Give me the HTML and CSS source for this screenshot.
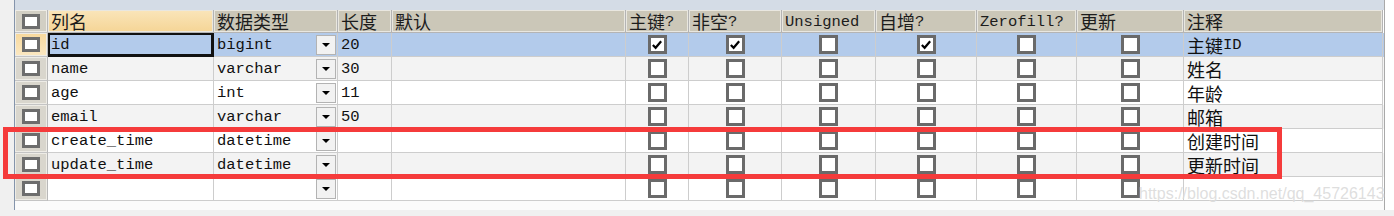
FILE: index.html
```html
<!DOCTYPE html>
<html lang="zh">
<head>
<meta charset="utf-8">
<title>表设计</title>
<link rel="stylesheet" href="styles.css">
</head>
<body>
<div class="page">
  <div class="main">
    <div class="lstrip"></div>
    <div class="panel">
      <div class="topband"></div>
      <div class="row head">
        <div class="hc ind"><span class="box"></span></div>
        <div class="hc active"><span class="zh">列名</span></div>
        <div class="hc"><span class="zh">数据类型</span></div>
        <div class="hc"><span class="zh">长度</span></div>
        <div class="hc"><span class="zh">默认</span></div>
        <div class="hc"><span class="zh">主键</span><span class="lat">?</span></div>
        <div class="hc"><span class="zh">非空</span><span class="lat">?</span></div>
        <div class="hc"><span class="lat">Unsigned</span></div>
        <div class="hc"><span class="zh">自增</span><span class="lat">?</span></div>
        <div class="hc"><span class="lat">Zerofill?</span></div>
        <div class="hc"><span class="zh">更新</span></div>
        <div class="hc"><span class="zh">注释</span></div>
      </div>

      <div class="row sel">
        <div class="c ind cur"><span class="box"></span></div>
        <div class="c focus">id</div>
        <div class="c type">bigint<span class="dd"><i></i></span></div>
        <div class="c">20</div>
        <div class="c"></div>
        <div class="c chk"><span class="cb on"><svg viewBox="0 0 13 13"><path d="M2 6.5 L5 9.5 L11 2.5"/></svg></span></div>
        <div class="c chk"><span class="cb on"><svg viewBox="0 0 13 13"><path d="M2 6.5 L5 9.5 L11 2.5"/></svg></span></div>
        <div class="c chk"><span class="cb"></span></div>
        <div class="c chk"><span class="cb on"><svg viewBox="0 0 13 13"><path d="M2 6.5 L5 9.5 L11 2.5"/></svg></span></div>
        <div class="c chk"><span class="cb"></span></div>
        <div class="c chk"><span class="cb"></span></div>
        <div class="c"><span class="zh">主键</span><span class="lat">ID</span></div>
      </div>

      <div class="row alt">
        <div class="c ind"><span class="box"></span></div>
        <div class="c">name</div>
        <div class="c type">varchar<span class="dd"><i></i></span></div>
        <div class="c">30</div>
        <div class="c"></div>
        <div class="c chk"><span class="cb"></span></div>
        <div class="c chk"><span class="cb"></span></div>
        <div class="c chk"><span class="cb"></span></div>
        <div class="c chk"><span class="cb"></span></div>
        <div class="c chk"><span class="cb"></span></div>
        <div class="c chk"><span class="cb"></span></div>
        <div class="c"><span class="zh">姓名</span></div>
      </div>

      <div class="row">
        <div class="c ind"><span class="box"></span></div>
        <div class="c">age</div>
        <div class="c type">int<span class="dd"><i></i></span></div>
        <div class="c">11</div>
        <div class="c"></div>
        <div class="c chk"><span class="cb"></span></div>
        <div class="c chk"><span class="cb"></span></div>
        <div class="c chk"><span class="cb"></span></div>
        <div class="c chk"><span class="cb"></span></div>
        <div class="c chk"><span class="cb"></span></div>
        <div class="c chk"><span class="cb"></span></div>
        <div class="c"><span class="zh">年龄</span></div>
      </div>

      <div class="row alt">
        <div class="c ind"><span class="box"></span></div>
        <div class="c">email</div>
        <div class="c type">varchar<span class="dd"><i></i></span></div>
        <div class="c">50</div>
        <div class="c"></div>
        <div class="c chk"><span class="cb"></span></div>
        <div class="c chk"><span class="cb"></span></div>
        <div class="c chk"><span class="cb"></span></div>
        <div class="c chk"><span class="cb"></span></div>
        <div class="c chk"><span class="cb"></span></div>
        <div class="c chk"><span class="cb"></span></div>
        <div class="c"><span class="zh">邮箱</span></div>
      </div>

      <div class="row">
        <div class="c ind"><span class="box"></span></div>
        <div class="c">create_time</div>
        <div class="c type">datetime<span class="dd"><i></i></span></div>
        <div class="c"></div>
        <div class="c"></div>
        <div class="c chk"><span class="cb"></span></div>
        <div class="c chk"><span class="cb"></span></div>
        <div class="c chk"><span class="cb"></span></div>
        <div class="c chk"><span class="cb"></span></div>
        <div class="c chk"><span class="cb"></span></div>
        <div class="c chk"><span class="cb"></span></div>
        <div class="c"><span class="zh">创建时间</span></div>
      </div>

      <div class="row alt">
        <div class="c ind"><span class="box"></span></div>
        <div class="c">update_time</div>
        <div class="c type">datetime<span class="dd"><i></i></span></div>
        <div class="c"></div>
        <div class="c"></div>
        <div class="c chk"><span class="cb"></span></div>
        <div class="c chk"><span class="cb"></span></div>
        <div class="c chk"><span class="cb"></span></div>
        <div class="c chk"><span class="cb"></span></div>
        <div class="c chk"><span class="cb"></span></div>
        <div class="c chk"><span class="cb"></span></div>
        <div class="c"><span class="zh">更新时间</span></div>
      </div>

      <div class="row">
        <div class="c ind"><span class="box"></span></div>
        <div class="c"></div>
        <div class="c type"><span class="dd"><i></i></span></div>
        <div class="c"></div>
        <div class="c"></div>
        <div class="c chk"><span class="cb"></span></div>
        <div class="c chk"><span class="cb"></span></div>
        <div class="c chk"><span class="cb"></span></div>
        <div class="c chk"><span class="cb"></span></div>
        <div class="c chk"><span class="cb"></span></div>
        <div class="c chk"><span class="cb"></span></div>
        <div class="c"></div>
      </div>
      <div class="filler"></div>
    </div>
    <div class="rstrip"></div>
  </div>
  <div class="foot"></div>

  <div class="mark"></div>
  <div class="wm">https://blog.csdn.net/qq_45726143</div>
</div>
</body>
</html>
```

FILE: styles.css
```css
html, body {
  margin: 0;
  padding: 0;
  background: #ffffff;
}

.page {
  position: relative;
  width: 1394px;
  height: 216px;
  overflow: hidden;
  display: flex;
  flex-direction: column;
}

.main {
  display: flex;
  height: 210px;
}

.lstrip {
  width: 14px;
  background: #f0f0f0;
}

.rstrip {
  flex: 1;
  background: #ffffff;
}

.foot {
  height: 6px;
  background: #f0f0f0;
}

.panel {
  width: 1369px;
  border-left: 1px solid #8494ab;
  border-right: 1px solid #a9a9a9;
  background: #fbfbfb;
  display: flex;
  flex-direction: column;
}

.topband {
  height: 10px;
  background: #d4dce6;
}

.filler {
  flex: 1;
}

.row {
  display: grid;
  grid-template-columns: 33px 166px 124px 54px 234px 63px 93px 94px 101px 100px 107px 199px;
  background: #ffffff;
}

.row.alt {
  background: #f3f3f3;
}

.row.sel {
  background: #b3cbeb;
}

.c, .hc {
  box-sizing: border-box;
  display: flex;
  align-items: center;
  padding-left: 3px;
  white-space: nowrap;
  font-family: "Liberation Mono", "Noto Sans CJK SC", monospace;
  font-size: 15.5px;
  line-height: 18px;
  color: #101010;
}

.c {
  height: 24px;
  border-right: 1px solid #cdcdcd;
  border-bottom: 1px solid #cdcdcd;
}

.hc {
  height: 23px;
  background: #cbc7b8;
  border-right: 1px solid #b4b4b4;
  border-bottom: 1px solid #b4b4b4;
  box-shadow: inset 1px 1px 0 #e9e7e0, inset -1px -1px 0 #e9e7e0;
  color: #1c1c1c;
}

.hc.active {
  background: linear-gradient(#fae5ba, #f5d596);
}

.zh {
  font-family: "Noto Sans CJK SC", sans-serif;
  font-size: 18px;
  line-height: 20px;
}

.lat {
  font-family: "Liberation Mono", monospace;
  font-size: 15.5px;
  line-height: 18px;
  padding-top: 1px;
}

.ind {
  justify-content: center;
  padding-left: 0;
  background: #d9d6cd;
  box-shadow: inset 1px 1px 0 #eeece6, inset -1px -1px 0 #eeece6;
  border-right-color: #b8b8b8;
  border-bottom-color: #c4c4c4;
}

.hc.ind {
  background: #d2cfc4;
}

.ind.cur {
  background: linear-gradient(#f7d89c, #fbe8c2);
}

.box {
  box-sizing: border-box;
  width: 18px;
  height: 15px;
  border: 3px solid #6d6d6d;
  background: #ffffff;
}

.focus {
  box-shadow: inset 0 0 0 2px #111111;
  border-right-color: #111111;
  border-bottom-color: #111111;
}

.type {
  padding-right: 1px;
}

.dd {
  box-sizing: border-box;
  width: 20px;
  height: 20px;
  border: 1px solid #b3b3b3;
  background: #f2f2f2;
  display: flex;
  align-items: center;
  justify-content: center;
  margin-left: auto;
}

.dd i {
  width: 0;
  height: 0;
  border-left: 4px solid transparent;
  border-right: 4px solid transparent;
  border-top: 4px solid #000000;
  margin-top: 1px;
}

.chk {
  justify-content: center;
  padding-left: 0;
}

.cb {
  box-sizing: border-box;
  width: 19px;
  height: 19px;
  border: 3px solid #6a6a6a;
  background: #ffffff;
  display: flex;
  align-items: center;
  justify-content: center;
}

.cb svg {
  width: 12px;
  height: 12px;
}

.cb svg path {
  fill: none;
  stroke: #000000;
  stroke-width: 2.4;
}

.mark {
  position: absolute;
  left: 3px;
  top: 127px;
  width: 1279px;
  height: 52px;
  box-sizing: border-box;
  border: 5px solid #f53b3b;
}

.wm {
  position: absolute;
  left: 1139px;
  top: 185px;
  font-family: "Liberation Sans", Arial, sans-serif;
  font-size: 16px;
  color: rgba(200, 200, 200, 0.6);
  text-shadow: 0 0 1px rgba(255, 255, 255, 0.8);
  white-space: nowrap;
}
```
